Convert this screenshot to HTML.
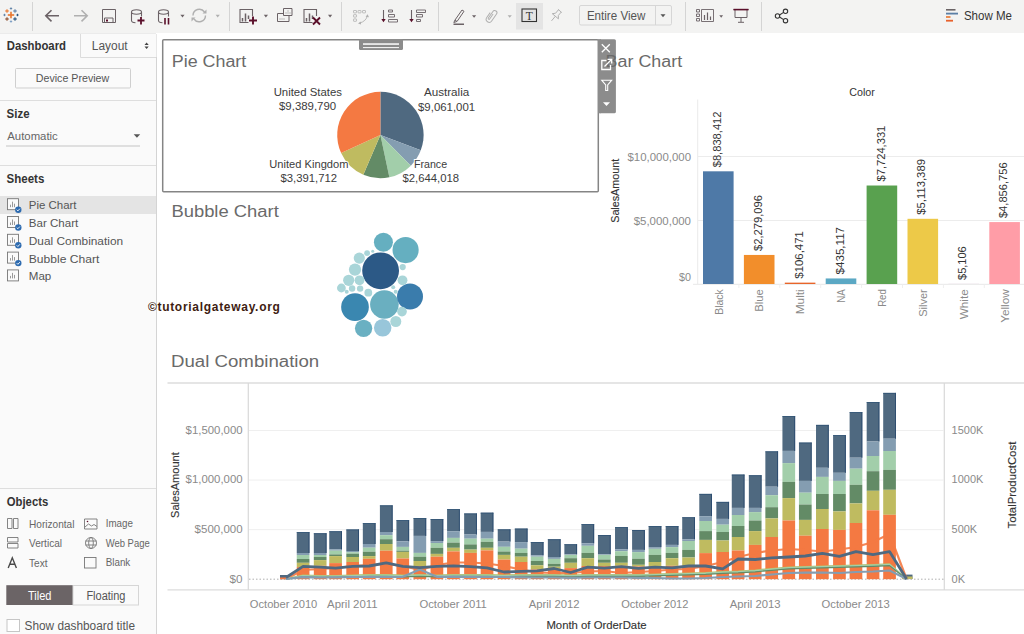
<!DOCTYPE html>
<html><head><meta charset="utf-8"><style>
html,body{margin:0;padding:0;width:1024px;height:634px;overflow:hidden;background:#fff}
svg{display:block;font-family:"Liberation Sans",sans-serif}
</style></head><body>
<svg width="1024" height="634" viewBox="0 0 1024 634">
<rect x="0" y="0" width="1024" height="634" fill="#ffffff" />
<rect x="0" y="0" width="1024" height="33" fill="#f3f3f2" />
<line x1="0" y1="33.5" x2="156" y2="33.5" stroke="#ebebeb" stroke-width="1" />
<rect x="0" y="34" width="156" height="600" fill="#fafafa" />
<line x1="156.5" y1="34" x2="156.5" y2="634" stroke="#d4d4d4" stroke-width="1" />
<line x1="32.5" y1="2" x2="32.5" y2="31" stroke="#d4d4d4" stroke-width="1" />
<line x1="229.5" y1="2" x2="229.5" y2="31" stroke="#d4d4d4" stroke-width="1" />
<line x1="341.5" y1="2" x2="341.5" y2="31" stroke="#d4d4d4" stroke-width="1" />
<line x1="438.5" y1="2" x2="438.5" y2="31" stroke="#d4d4d4" stroke-width="1" />
<line x1="685.5" y1="2" x2="685.5" y2="31" stroke="#d4d4d4" stroke-width="1" />
<line x1="761.5" y1="2" x2="761.5" y2="31" stroke="#d4d4d4" stroke-width="1" />
<line x1="7.8" y1="15" x2="14.2" y2="15" stroke="#e8762d" stroke-width="1.6" />
<line x1="11" y1="11.8" x2="11" y2="18.2" stroke="#e8762d" stroke-width="1.6" />
<line x1="5.2" y1="11" x2="8.8" y2="11" stroke="#e8762d" stroke-width="1.1" />
<line x1="7" y1="9.2" x2="7" y2="12.8" stroke="#e8762d" stroke-width="1.1" />
<line x1="13.2" y1="11" x2="16.8" y2="11" stroke="#5b7fa6" stroke-width="1.1" />
<line x1="15" y1="9.2" x2="15" y2="12.8" stroke="#5b7fa6" stroke-width="1.1" />
<line x1="5.2" y1="19" x2="8.8" y2="19" stroke="#8a4b2c" stroke-width="1.1" />
<line x1="7" y1="17.2" x2="7" y2="20.8" stroke="#8a4b2c" stroke-width="1.1" />
<line x1="13.2" y1="19" x2="16.8" y2="19" stroke="#1f4e79" stroke-width="1.1" />
<line x1="15" y1="17.2" x2="15" y2="20.8" stroke="#1f4e79" stroke-width="1.1" />
<line x1="9.8" y1="8.5" x2="12.2" y2="8.5" stroke="#5b7fa6" stroke-width="0.9" />
<line x1="11" y1="7.3" x2="11" y2="9.7" stroke="#5b7fa6" stroke-width="0.9" />
<line x1="9.8" y1="21.5" x2="12.2" y2="21.5" stroke="#7b9cc3" stroke-width="0.9" />
<line x1="11" y1="20.3" x2="11" y2="22.7" stroke="#7b9cc3" stroke-width="0.9" />
<line x1="3.3" y1="15" x2="5.7" y2="15" stroke="#5b7fa6" stroke-width="0.9" />
<line x1="4.5" y1="13.8" x2="4.5" y2="16.2" stroke="#5b7fa6" stroke-width="0.9" />
<line x1="16.3" y1="15" x2="18.7" y2="15" stroke="#1f4e79" stroke-width="0.9" />
<line x1="17.5" y1="13.8" x2="17.5" y2="16.2" stroke="#1f4e79" stroke-width="0.9" />
<path d="M59 15.8 H46 M51.5 10.2 L45.8 15.8 L51.5 21.4" fill="none" stroke="#6b6266" stroke-width="1.6"/>
<path d="M74 15.8 H87 M81.5 10.2 L87.2 15.8 L81.5 21.4" fill="none" stroke="#b0b0b0" stroke-width="1.6"/>
<path d="M102.5 9.5 H115.5 V22.5 H102.5 Z M104.5 22.5 V18 H113 V22.5" fill="none" stroke="#6b6266" stroke-width="1"/>
<rect x="106" y="19.5" width="2" height="2" fill="#5a0f2a" />
<path d="M131.5 12.0 a5 2.2 0 0 1 10 0 a5 2.2 0 0 1 -10 0 V20.5 q0 2 4 2.3 M141.5 12.0 V16.5" fill="none" stroke="#6b6266" stroke-width="1.1"/>
<path d="M137.5 20.5 H144.5 M141 17 V24.5" stroke="#5a0f2a" stroke-width="1.8"/>
<path d="M158.5 12.0 a5 2.2 0 0 1 10 0 a5 2.2 0 0 1 -10 0 V20.5 q0 2 4 2.3 M168.5 12.0 V16.5" fill="none" stroke="#6b6266" stroke-width="1.1"/>
<path d="M165 18 V24.5 M168.5 18 V24.5" stroke="#5a0f2a" stroke-width="1.6"/>
<path d="M180.4 14.8 h4.2 l-2.1 2.6 z" fill="#6b6266"/>
<path d="M193 15.5 a6.3 6.3 0 0 1 11.5 -3.5 M205.5 15.5 a6.3 6.3 0 0 1 -11.5 3.5" fill="none" stroke="#b0b0b0" stroke-width="1.4"/>
<path d="M206.5 9.5 v4 h-4 z M191.5 21.5 v-4 h4 z" fill="#b0b0b0"/>
<path d="M215.6 14.8 h4.2 l-2.1 2.6 z" fill="#b0b0b0"/>
<path d="M252.5 16 V9.5 H240.0 V22.5 H248.5" fill="none" stroke="#6b6266" stroke-width="1.1"/>
<path d="M242.5 18 v3.5 M245.5 13.5 v8 M248.5 15.5 v3.5" stroke="#6b6266" stroke-width="1.5"/>
<path d="M249 20.5 H257 M253 16.5 V24.5" stroke="#5a0f2a" stroke-width="1.9"/>
<path d="M263.8 14.8 h4.2 l-2.1 2.6 z" fill="#6b6266"/>
<path d="M283.5 8.5 H292 V15.5 H283.5 Z M277.5 13.5 H283 M277.5 13.5 V21.5 H289 V16" fill="none" stroke="#6b6266" stroke-width="1"/>
<path d="M286 14 v-2 M288 14 v-4 M290 14 v-2 M280 20 v-2 M282 20 v-2 M284 20 v-2" stroke="#b0b0b0" stroke-width="0.8"/>
<path d="M316.5 16 V9.5 H304.0 V22.5 H312.5" fill="none" stroke="#6b6266" stroke-width="1.1"/>
<path d="M306.5 18 v3.5 M309.5 13.5 v8 M312.5 15.5 v3.5" stroke="#6b6266" stroke-width="1.5"/>
<path d="M313 17.5 L320 24.5 M320 17.5 L313 24.5" stroke="#5a0f2a" stroke-width="1.9"/>
<path d="M328 14.8 h4.2 l-2.1 2.6 z" fill="#6b6266"/>
<rect x="353.5" y="10.5" width="3" height="2.4" rx="0.4" fill="none" stroke="#b0b0b0" stroke-width="0.8"/>
<rect x="358" y="10.5" width="3" height="2.4" rx="0.4" fill="none" stroke="#b0b0b0" stroke-width="0.8"/>
<rect x="362.5" y="10.5" width="3" height="2.4" rx="0.4" fill="none" stroke="#b0b0b0" stroke-width="0.8"/>
<rect x="353.5" y="14.7" width="3" height="2.4" rx="0.4" fill="none" stroke="#b0b0b0" stroke-width="0.8"/>
<rect x="353.5" y="18.9" width="3" height="2.4" rx="0.4" fill="none" stroke="#b0b0b0" stroke-width="0.8"/>
<path d="M359.5 23 q6.5 -1.5 8 -7.5" fill="none" stroke="#b0b0b0" stroke-width="0.9"/>
<path d="M365.6 16.8 l2 -2.6 l1.4 3z M358 23.5 l2.8 -2 l0.3 3z" fill="#b0b0b0"/>
<path d="M383.5 10 V21" stroke="#6b6266" stroke-width="1.1"/>
<path d="M381.3 19 h4.4 l-2.2 3.3z" fill="#5a0f2a"/>
<path d="M388.5 10 h4 v2 h-4z M388.5 14.5 h6 v2.5 h-6z M388.5 19.5 h9 v2.5 h-9z" fill="none" stroke="#6b6266" stroke-width="0.9"/>
<path d="M411.5 10 V21" stroke="#6b6266" stroke-width="1.1"/>
<path d="M409.3 19 h4.4 l-2.2 3.3z" fill="#5a0f2a"/>
<path d="M416.5 10 h9 v2.5 h-9z M416.5 14.5 h6 v2.5 h-6z M416.5 19.5 h4 v2 h-4z" fill="none" stroke="#6b6266" stroke-width="0.9"/>
<path d="M455 20 L462 10 l2 1.3 L457 21.5 z M455 20 l-1.2 2.5 l3 -1" fill="none" stroke="#6b6266" stroke-width="1"/>
<rect x="453.5" y="23.5" width="10.5" height="1.5" fill="#6b6266" />
<path d="M472 15.2 h4.2 l-2.1 2.6 z" fill="#6b6266"/>
<path transform="translate(491.5,16) rotate(35)" d="M-3 -2 V4 a3 3 0 0 0 6 0 V-4.5 a2.2 2.2 0 0 0 -4.4 0 V3.5 a0.8 0.8 0 0 0 1.6 0 V-2.5" fill="none" stroke="#b0b0b0" stroke-width="1"/>
<path d="M507.6 15.2 h4.2 l-2.1 2.6 z" fill="#b0b0b0"/>
<rect x="516" y="3" width="27" height="26.5" fill="#e4e4e4" />
<rect x="522" y="9" width="14.5" height="12.5" fill="none" stroke="#333" stroke-width="1.1"/>
<text x="529.3" y="19.6" font-family="Liberation Serif" font-size="11.5" fill="#333" text-anchor="middle">T</text>
<g transform="translate(556,15.5) rotate(40)" fill="none" stroke="#b0b0b0" stroke-width="0.9"><path d="M-2.5 -6 h5 M-1.8 -6 V-1.5 L-4 1 H4 L1.8 -1.5 V-6 M0 1 V7"/></g>
<rect x="579.5" y="5.5" width="92" height="19.5" rx="1.5" fill="#f3f3f2" stroke="#d6d6d6"/>
<line x1="655.5" y1="6" x2="655.5" y2="25" stroke="#d6d6d6" stroke-width="1" />
<text x="586.9" y="19.8" font-size="12.3" fill="#555" font-weight="400" text-anchor="start" textLength="58.4" lengthAdjust="spacingAndGlyphs" >Entire View</text>
<path d="M660.5 14.3 h5 l-2.5 3 z" fill="#555"/>
<path d="M696.5 9.5 h3 v2.5 h-3z M696.5 14 h3 v2.5 h-3z M696.5 18.5 h3 v2.5 h-3z M701.5 9.5 h12 V21.5 h-12z" fill="none" stroke="#6b6266" stroke-width="0.9"/>
<path d="M704.5 15 v5 M707.5 12.5 v7.5 M710.5 16.5 v3.5" stroke="#6b6266" stroke-width="1.2"/>
<path d="M719.3 15.3 h3.8 l-1.9 2.4 z" fill="#6b6266"/>
<path d="M733.5 9.5 h15 M735 10 V17.5 H747 V10 M741 17.5 V22 M738 22.3 h6" fill="none" stroke="#6b6266" stroke-width="1"/>
<line x1="733.5" y1="9.6" x2="748.5" y2="9.6" stroke="#5a0f2a" stroke-width="1.6" />
<g fill="none" stroke="#333" stroke-width="1.1"><circle cx="777.5" cy="16" r="2.2"/><circle cx="785.5" cy="11.3" r="2.2"/><circle cx="785.5" cy="20.7" r="2.2"/><path d="M779.5 15 L783.6 12.4 M779.5 17 L783.6 19.6"/></g>
<rect x="946" y="9" width="9.5" height="1.6" fill="#6b6466" />
<rect x="946" y="12.7" width="12" height="1.8" fill="#5b7fa6" />
<rect x="946" y="16.2" width="4.5" height="1.6" fill="#e8762d" />
<rect x="946" y="19.8" width="7" height="1.8" fill="#e8622d" />
<text x="963.9" y="19.8" font-size="12" fill="#333" font-weight="400" text-anchor="start" textLength="48" lengthAdjust="spacingAndGlyphs" >Show Me</text>
<rect x="80.5" y="34" width="76" height="23" fill="#fafafa" />
<line x1="80.5" y1="34" x2="80.5" y2="57.5" stroke="#dcdcdc" stroke-width="1" />
<line x1="80.5" y1="57.5" x2="156" y2="57.5" stroke="#dcdcdc" stroke-width="1" />
<text x="6.8" y="49.9" font-size="12" fill="#333" font-weight="700" text-anchor="start" textLength="59.2" lengthAdjust="spacingAndGlyphs" >Dashboard</text>
<text x="91.8" y="50" font-size="12" fill="#555" font-weight="400" text-anchor="start" textLength="35.8" lengthAdjust="spacingAndGlyphs" >Layout</text>
<path d="M144.5 45 l2.1 -2.6 l2.1 2.6z M144.5 46.5 l2.1 2.6 l2.1 -2.6z" fill="#444"/>
<rect x="15.5" y="68.5" width="115" height="19.5" rx="1" fill="#fafafa" stroke="#cfcfcf"/>
<text x="35.8" y="81.7" font-size="10.8" fill="#555" font-weight="400" text-anchor="start" textLength="73.4" lengthAdjust="spacingAndGlyphs" >Device Preview</text>
<line x1="0" y1="100.5" x2="156" y2="100.5" stroke="#dedede" stroke-width="1" />
<text x="6.6" y="118.1" font-size="12" fill="#333" font-weight="700" text-anchor="start" textLength="22.9" lengthAdjust="spacingAndGlyphs" >Size</text>
<text x="7.3" y="139.8" font-size="11" fill="#666" font-weight="400" text-anchor="start" textLength="50.5" lengthAdjust="spacingAndGlyphs" >Automatic</text>
<path d="M133.7 134.3 h6.5 l-3.25 3.5 z" fill="#555"/>
<line x1="6" y1="146" x2="140" y2="146" stroke="#d6d6d6" stroke-width="1.3" />
<line x1="0" y1="165.5" x2="156" y2="165.5" stroke="#dedede" stroke-width="1" />
<text x="6.6" y="182.9" font-size="12" fill="#333" font-weight="700" text-anchor="start" textLength="37.7" lengthAdjust="spacingAndGlyphs" >Sheets</text>
<rect x="0" y="196" width="156" height="18" fill="#e4e4e4" />
<rect x="7.5" y="198.7" width="11" height="11" fill="#fafafa" stroke="#777" stroke-width="0.9"/>
<path d="M10.5 207.2 v-2.5 M12.5 207.2 v-5.5 M14.5 207.2 v-3.5" stroke="#999" stroke-width="1"/>
<circle cx="18.3" cy="209.7" r="3.2" fill="#2d6bb0"/>
<path d="M16.7 209.7 l1.2 1.2 l2 -2.2" stroke="#fff" stroke-width="0.9" fill="none"/>
<text x="28.8" y="209.2" font-size="11.4" fill="#555" font-weight="400" text-anchor="start" textLength="47.7" lengthAdjust="spacingAndGlyphs" >Pie Chart</text>
<rect x="7.5" y="216.5" width="11" height="11" fill="#fafafa" stroke="#777" stroke-width="0.9"/>
<path d="M10.5 225.0 v-2.5 M12.5 225.0 v-5.5 M14.5 225.0 v-3.5" stroke="#999" stroke-width="1"/>
<circle cx="18.3" cy="227.5" r="3.2" fill="#2d6bb0"/>
<path d="M16.7 227.5 l1.2 1.2 l2 -2.2" stroke="#fff" stroke-width="0.9" fill="none"/>
<text x="28.8" y="227.0" font-size="11.4" fill="#555" font-weight="400" text-anchor="start" textLength="49.5" lengthAdjust="spacingAndGlyphs" >Bar Chart</text>
<rect x="7.5" y="234.29999999999998" width="11" height="11" fill="#fafafa" stroke="#777" stroke-width="0.9"/>
<path d="M10.5 242.79999999999998 v-2.5 M12.5 242.79999999999998 v-5.5 M14.5 242.79999999999998 v-3.5" stroke="#999" stroke-width="1"/>
<circle cx="18.3" cy="245.29999999999998" r="3.2" fill="#2d6bb0"/>
<path d="M16.7 245.29999999999998 l1.2 1.2 l2 -2.2" stroke="#fff" stroke-width="0.9" fill="none"/>
<text x="28.8" y="244.79999999999998" font-size="11.4" fill="#555" font-weight="400" text-anchor="start" textLength="94.3" lengthAdjust="spacingAndGlyphs" >Dual Combination</text>
<rect x="7.5" y="252.10000000000002" width="11" height="11" fill="#fafafa" stroke="#777" stroke-width="0.9"/>
<path d="M10.5 260.6 v-2.5 M12.5 260.6 v-5.5 M14.5 260.6 v-3.5" stroke="#999" stroke-width="1"/>
<circle cx="18.3" cy="263.1" r="3.2" fill="#2d6bb0"/>
<path d="M16.7 263.1 l1.2 1.2 l2 -2.2" stroke="#fff" stroke-width="0.9" fill="none"/>
<text x="28.8" y="262.6" font-size="11.4" fill="#555" font-weight="400" text-anchor="start" textLength="70.5" lengthAdjust="spacingAndGlyphs" >Bubble Chart</text>
<rect x="7.5" y="269.9" width="11" height="11" fill="#fafafa" stroke="#777" stroke-width="0.9"/>
<path d="M10.5 278.4 v-2.5 M12.5 278.4 v-5.5 M14.5 278.4 v-3.5" stroke="#999" stroke-width="1"/>
<text x="28.8" y="280.4" font-size="11.4" fill="#555" font-weight="400" text-anchor="start" textLength="22.5" lengthAdjust="spacingAndGlyphs" >Map</text>
<line x1="0" y1="488.5" x2="156" y2="488.5" stroke="#dedede" stroke-width="1" />
<text x="6.8" y="506" font-size="12" fill="#333" font-weight="700" text-anchor="start" textLength="41.4" lengthAdjust="spacingAndGlyphs" >Objects</text>
<path d="M7.5 518.5 h4.5 v10 h-4.5z M13.5 518.5 h4.5 v10 h-4.5z" fill="none" stroke="#777" stroke-width="0.9"/>
<path d="M7.5 537.5 h10.5 v4.5 h-10.5z M7.5 543.5 h10.5 v4.5 h-10.5z" fill="none" stroke="#777" stroke-width="0.9"/>
<path d="M8.2 568 L12.3 557.8 L16.4 568 M9.6 564.3 h5.4" fill="none" stroke="#4a4a4a" stroke-width="1.4"/>
<text x="29" y="527.5" font-size="10.8" fill="#666" font-weight="400" text-anchor="start" textLength="45.4" lengthAdjust="spacingAndGlyphs" >Horizontal</text>
<text x="29" y="547" font-size="10.8" fill="#666" font-weight="400" text-anchor="start" textLength="33" lengthAdjust="spacingAndGlyphs" >Vertical</text>
<text x="29" y="566.6" font-size="10.8" fill="#666" font-weight="400" text-anchor="start" textLength="18.5" lengthAdjust="spacingAndGlyphs" >Text</text>
<path d="M84.5 519 h12.5 v10 h-12.5z M85 527 l3.5 -3 l3 2 l2.5 -1.5 l3 2" fill="none" stroke="#777" stroke-width="0.9"/>
<circle cx="87.5" cy="521.5" r="0.8" fill="#5a0f2a"/>
<g fill="none" stroke="#777" stroke-width="0.9"><circle cx="91" cy="543" r="5.5"/><ellipse cx="91" cy="543" rx="2.3" ry="5.5"/><path d="M85.5 541 h11 M85.5 545 h11"/></g>
<rect x="84.5" y="557.5" width="11.5" height="10.5" fill="none" stroke="#777" stroke-width="0.9"/>
<text x="105.7" y="527" font-size="10.8" fill="#666" font-weight="400" text-anchor="start" textLength="27.2" lengthAdjust="spacingAndGlyphs" >Image</text>
<text x="105.7" y="546.5" font-size="10.8" fill="#666" font-weight="400" text-anchor="start" textLength="44" lengthAdjust="spacingAndGlyphs" >Web Page</text>
<text x="105.7" y="566" font-size="10.8" fill="#666" font-weight="400" text-anchor="start" textLength="24.6" lengthAdjust="spacingAndGlyphs" >Blank</text>
<rect x="6.3" y="585.2" width="66.7" height="19.8" fill="#6b6466" />
<rect x="73" y="585.5" width="65.5" height="19.5" fill="#fafafa" stroke="#d6d6d6"/>
<text x="28" y="599.7" font-size="12" fill="#fff" font-weight="400" text-anchor="start" textLength="23.5" lengthAdjust="spacingAndGlyphs" >Tiled</text>
<text x="86.4" y="599.7" font-size="12" fill="#555" font-weight="400" text-anchor="start" textLength="39.1" lengthAdjust="spacingAndGlyphs" >Floating</text>
<rect x="7" y="619.5" width="12.5" height="12" fill="#fff" stroke="#c6c6c6"/>
<text x="24.5" y="629.7" font-size="12.5" fill="#555" font-weight="400" text-anchor="start" textLength="110.5" lengthAdjust="spacingAndGlyphs" >Show dashboard title</text>
<rect x="162.7" y="39.7" width="435.6" height="152" rx="1" fill="#fff" stroke="#858585" stroke-width="1.5"/>
<text x="171.8" y="67.2" font-size="17.3" fill="#6a6a6a" font-weight="400" text-anchor="start" textLength="74.5" lengthAdjust="spacingAndGlyphs" >Pie Chart</text>
<rect x="359" y="39" width="44" height="11" rx="1.5" fill="#8c8c8c"/>
<rect x="363" y="43.2" width="36" height="1.7" fill="#f0f0f0" />
<rect x="363" y="47" width="36" height="1.1" fill="#f0f0f0" />
<path d="M380.4 135.0 L380.40 91.80 A43.2 43.2 0 0 1 420.78 150.34 Z" fill="#4f6980"/>
<path d="M380.4 135.0 L420.78 150.34 A43.2 43.2 0 0 1 410.84 165.65 Z" fill="#849db1"/>
<path d="M380.4 135.0 L410.84 165.65 A43.2 43.2 0 0 1 389.38 177.26 Z" fill="#a2ceaa"/>
<path d="M380.4 135.0 L389.38 177.26 A43.2 43.2 0 0 1 363.31 174.68 Z" fill="#638b66"/>
<path d="M380.4 135.0 L363.31 174.68 A43.2 43.2 0 0 1 341.12 152.98 Z" fill="#bfbb60"/>
<path d="M380.4 135.0 L341.12 152.98 A43.2 43.2 0 0 1 380.40 91.80 Z" fill="#f47942"/>
<text x="307.8" y="95.6" font-size="10.6" fill="#3c3c3c" font-weight="400" text-anchor="middle" textLength="68.3" lengthAdjust="spacingAndGlyphs" stroke="#fff" stroke-width="2" paint-order="stroke">United States</text>
<text x="307.6" y="110.3" font-size="10.6" fill="#3c3c3c" font-weight="400" text-anchor="middle" textLength="57.2" lengthAdjust="spacingAndGlyphs" stroke="#fff" stroke-width="2" paint-order="stroke">$9,389,790</text>
<text x="446.6" y="95.6" font-size="10.6" fill="#3c3c3c" font-weight="400" text-anchor="middle" textLength="45.4" lengthAdjust="spacingAndGlyphs" stroke="#fff" stroke-width="2" paint-order="stroke">Australia</text>
<text x="446.6" y="110.5" font-size="10.6" fill="#3c3c3c" font-weight="400" text-anchor="middle" textLength="57.2" lengthAdjust="spacingAndGlyphs" stroke="#fff" stroke-width="2" paint-order="stroke">$9,061,001</text>
<text x="308.9" y="167.6" font-size="10.6" fill="#3c3c3c" font-weight="400" text-anchor="middle" textLength="79.1" lengthAdjust="spacingAndGlyphs" stroke="#fff" stroke-width="2" paint-order="stroke">United Kingdom</text>
<text x="308.8" y="182.2" font-size="10.6" fill="#3c3c3c" font-weight="400" text-anchor="middle" textLength="56.6" lengthAdjust="spacingAndGlyphs" stroke="#fff" stroke-width="2" paint-order="stroke">$3,391,712</text>
<text x="430.5" y="167.8" font-size="10.6" fill="#3c3c3c" font-weight="400" text-anchor="middle" textLength="33.2" lengthAdjust="spacingAndGlyphs" stroke="#fff" stroke-width="2" paint-order="stroke">France</text>
<text x="430.8" y="182.2" font-size="10.6" fill="#3c3c3c" font-weight="400" text-anchor="middle" textLength="56.6" lengthAdjust="spacingAndGlyphs" stroke="#fff" stroke-width="2" paint-order="stroke">$2,644,018</text>
<text x="849.2" y="96.4" font-size="11" fill="#333" font-weight="400" text-anchor="start" textLength="25.6" lengthAdjust="spacingAndGlyphs" >Color</text>
<line x1="697.7" y1="99.5" x2="697.7" y2="284" stroke="#ebebeb" stroke-width="1" />
<line x1="698" y1="156.5" x2="1024" y2="156.5" stroke="#ececec" stroke-width="1" />
<line x1="698" y1="220.5" x2="1024" y2="220.5" stroke="#ececec" stroke-width="1" />
<line x1="693" y1="284.3" x2="1024" y2="284.3" stroke="#e8e8e8" stroke-width="1" />
<text x="691" y="160.5" font-size="11" fill="#8a8a8a" font-weight="400" text-anchor="end" textLength="63.5" lengthAdjust="spacingAndGlyphs" >$10,000,000</text>
<text x="691" y="225.3" font-size="11" fill="#8a8a8a" font-weight="400" text-anchor="end" textLength="57.3" lengthAdjust="spacingAndGlyphs" >$5,000,000</text>
<text x="691" y="280.5" font-size="11" fill="#8a8a8a" font-weight="400" text-anchor="end" textLength="12" lengthAdjust="spacingAndGlyphs" >$0</text>
<text transform="translate(619.3,190.8) rotate(-90)" x="0" y="0" font-size="11" fill="#333" stroke="#333" stroke-width="0.12" text-anchor="middle" textLength="64" lengthAdjust="spacingAndGlyphs">SalesAmount</text>
<rect x="703.0" y="171.31" width="30.6" height="112.69" fill="#4e79a7" />
<text transform="translate(720.90,167.31) rotate(-90)" font-size="11.2" fill="#333" textLength="55.8" lengthAdjust="spacingAndGlyphs">$8,838,412</text>
<text transform="translate(722.50,289.3) rotate(-90)" font-size="11" fill="#8a8a8a" text-anchor="end" textLength="25.5" lengthAdjust="spacingAndGlyphs">Black</text>
<rect x="743.9" y="254.94" width="30.6" height="29.06" fill="#f28e2b" />
<line x1="738.9" y1="284.5" x2="738.9" y2="288" stroke="#efefef" stroke-width="1" />
<text transform="translate(761.80,250.94) rotate(-90)" font-size="11.2" fill="#333" textLength="55.8" lengthAdjust="spacingAndGlyphs">$2,279,096</text>
<text transform="translate(763.40,289.3) rotate(-90)" font-size="11" fill="#8a8a8a" text-anchor="end" textLength="22.5" lengthAdjust="spacingAndGlyphs">Blue</text>
<rect x="784.8" y="282.64" width="30.6" height="1.36" fill="#e8652a" />
<line x1="779.8" y1="284.5" x2="779.8" y2="288" stroke="#efefef" stroke-width="1" />
<text transform="translate(802.70,278.64) rotate(-90)" font-size="11.2" fill="#333" textLength="47.5" lengthAdjust="spacingAndGlyphs">$106,471</text>
<text transform="translate(804.30,289.3) rotate(-90)" font-size="11" fill="#8a8a8a" text-anchor="end" textLength="25" lengthAdjust="spacingAndGlyphs">Multi</text>
<rect x="825.7" y="278.45" width="30.6" height="5.55" fill="#5ba8c4" />
<line x1="820.7" y1="284.5" x2="820.7" y2="288" stroke="#efefef" stroke-width="1" />
<text transform="translate(843.60,274.45) rotate(-90)" font-size="11.2" fill="#333" textLength="47.5" lengthAdjust="spacingAndGlyphs">$435,117</text>
<text transform="translate(845.20,289.3) rotate(-90)" font-size="11" fill="#8a8a8a" text-anchor="end" textLength="13.5" lengthAdjust="spacingAndGlyphs">NA</text>
<rect x="866.6" y="185.51" width="30.6" height="98.49" fill="#59a14f" />
<line x1="861.6" y1="284.5" x2="861.6" y2="288" stroke="#efefef" stroke-width="1" />
<text transform="translate(884.50,181.51) rotate(-90)" font-size="11.2" fill="#333" textLength="55.8" lengthAdjust="spacingAndGlyphs">$7,724,331</text>
<text transform="translate(886.10,289.3) rotate(-90)" font-size="11" fill="#8a8a8a" text-anchor="end" textLength="17.5" lengthAdjust="spacingAndGlyphs">Red</text>
<rect x="907.5" y="218.8" width="30.6" height="65.2" fill="#edc948" />
<line x1="902.5" y1="284.5" x2="902.5" y2="288" stroke="#efefef" stroke-width="1" />
<text transform="translate(925.40,214.80) rotate(-90)" font-size="11.2" fill="#333" textLength="55.8" lengthAdjust="spacingAndGlyphs">$5,113,389</text>
<text transform="translate(927.00,289.3) rotate(-90)" font-size="11" fill="#8a8a8a" text-anchor="end" textLength="27.5" lengthAdjust="spacingAndGlyphs">Silver</text>
<rect x="948.4" y="283.93" width="30.6" height="0.07" fill="#b07aa1" />
<line x1="943.4" y1="284.5" x2="943.4" y2="288" stroke="#efefef" stroke-width="1" />
<text transform="translate(966.30,279.93) rotate(-90)" font-size="11.2" fill="#333" textLength="33.6" lengthAdjust="spacingAndGlyphs">$5,106</text>
<text transform="translate(967.90,289.3) rotate(-90)" font-size="11" fill="#8a8a8a" text-anchor="end" textLength="30" lengthAdjust="spacingAndGlyphs">White</text>
<rect x="989.3" y="222.08" width="30.6" height="61.92" fill="#ff9da7" />
<line x1="984.3" y1="284.5" x2="984.3" y2="288" stroke="#efefef" stroke-width="1" />
<text transform="translate(1007.20,218.08) rotate(-90)" font-size="11.2" fill="#333" textLength="55.8" lengthAdjust="spacingAndGlyphs">$4,856,756</text>
<text transform="translate(1008.80,289.3) rotate(-90)" font-size="11" fill="#8a8a8a" text-anchor="end" textLength="33.5" lengthAdjust="spacingAndGlyphs">Yellow</text>
<rect x="598.6" y="39.2" width="17.3" height="74" rx="1.5" fill="#8c8c8c"/>
<rect x="598" y="39.2" width="3" height="74" fill="#8c8c8c" />
<text x="605.6" y="67.3" font-size="17.3" fill="#6a6a6a" font-weight="400" text-anchor="start" textLength="76.5" lengthAdjust="spacingAndGlyphs" >Bar Chart</text>
<path d="M601.8 44.2 L609.8 52.2 M609.8 44.2 L601.8 52.2" stroke="#fff" stroke-width="1.3"/>
<path d="M606.5 60.5 H601.8 V69.5 H610.5 V65 M604.5 66.5 L611 60 M607.5 59.3 H611.7 V63.5" fill="none" stroke="#fff" stroke-width="1.3"/>
<path d="M601.7 80.2 H611.7 L607.7 85 V90.5 H605.7 V85 Z" fill="none" stroke="#fff" stroke-width="1.1"/>
<path d="M603 102.3 h7 l-3.5 3.6z" fill="#fff"/>
<text x="171.4" y="217.3" font-size="17.3" fill="#6a6a6a" font-weight="400" text-anchor="start" textLength="107.4" lengthAdjust="spacingAndGlyphs" >Bubble Chart</text>
<text x="147.9" y="311.3" font-size="12" fill="#3e1d12" font-weight="700" textLength="132" lengthAdjust="spacing">©tutorialgateway.org</text>
<circle cx="380.6" cy="270.8" r="18.4" fill="#2c5986"/>
<circle cx="383.4" cy="242.2" r="9.5" fill="#65afc0"/>
<circle cx="405.6" cy="250.1" r="13.1" fill="#65afc0"/>
<circle cx="355.0" cy="307.1" r="13.85" fill="#3a87b0"/>
<circle cx="384.4" cy="304.5" r="14.3" fill="#6aafc0"/>
<circle cx="410.0" cy="296.5" r="13.0" fill="#3a7cac"/>
<circle cx="363.6" cy="328.3" r="8.65" fill="#6ab0c2"/>
<circle cx="382.7" cy="327.8" r="8.75" fill="#98c6da"/>
<circle cx="395.8" cy="321.5" r="5.5" fill="#a9d5d8"/>
<circle cx="402.0" cy="311.6" r="4.85" fill="#a9d5d8"/>
<circle cx="359.3" cy="258.1" r="5.6" fill="#a9d5d8"/>
<circle cx="355.0" cy="269.6" r="6.1" fill="#a9d5d8"/>
<circle cx="348.7" cy="280.3" r="5.6" fill="#a9d5d8"/>
<circle cx="359.5" cy="280.3" r="4.9" fill="#a9d5d8"/>
<circle cx="402.5" cy="280.3" r="4.9" fill="#a9d5d8"/>
<circle cx="402.7" cy="267.1" r="3.1" fill="#a9d5d8"/>
<circle cx="367.1" cy="253.2" r="2.9" fill="#a9d5d8"/>
<circle cx="372.7" cy="251.3" r="1.5" fill="#a9d5d8"/>
<circle cx="341.4" cy="288.0" r="4.4" fill="#a9d5d8"/>
<circle cx="352.1" cy="288.5" r="3.2" fill="#a9d5d8"/>
<circle cx="360.1" cy="288.6" r="3.2" fill="#a9d5d8"/>
<circle cx="368.3" cy="292.7" r="3.9" fill="#a9d5d8"/>
<circle cx="346.7" cy="291.7" r="2.0" fill="#a9d5d8"/>
<circle cx="395.7" cy="291.7" r="2.0" fill="#a9d5d8"/>
<circle cx="393.2" cy="287.3" r="2.0" fill="#a9d5d8"/>
<text x="171.0" y="367.4" font-size="17.3" fill="#6a6a6a" font-weight="400" text-anchor="start" textLength="148.2" lengthAdjust="spacingAndGlyphs" >Dual Combination</text>
<line x1="167.5" y1="383" x2="1024" y2="383" stroke="#dcdcdc" stroke-width="1.3" />
<line x1="167.5" y1="589.8" x2="1024" y2="589.8" stroke="#dcdcdc" stroke-width="1.3" />
<line x1="248.3" y1="383" x2="248.3" y2="590" stroke="#d8d8d8" stroke-width="1.2" />
<line x1="944.3" y1="383" x2="944.3" y2="590" stroke="#d8d8d8" stroke-width="1.2" />
<line x1="249" y1="529.6333333333333" x2="944" y2="529.6333333333333" stroke="#efefef" stroke-width="1" />
<line x1="249" y1="480.06666666666666" x2="944" y2="480.06666666666666" stroke="#efefef" stroke-width="1" />
<line x1="249" y1="430.5" x2="944" y2="430.5" stroke="#efefef" stroke-width="1" />
<line x1="249" y1="579.2" x2="944" y2="579.2" stroke="#9a9a9a" stroke-width="0.8" stroke-dasharray="1.5,2"/>
<text x="242.6" y="433.6" font-size="11" fill="#8a8a8a" font-weight="400" text-anchor="end" textLength="57" lengthAdjust="spacingAndGlyphs" >$1,500,000</text>
<text x="242.6" y="483.4" font-size="11" fill="#8a8a8a" font-weight="400" text-anchor="end" textLength="57" lengthAdjust="spacingAndGlyphs" >$1,000,000</text>
<text x="242.6" y="533.0" font-size="11" fill="#8a8a8a" font-weight="400" text-anchor="end" textLength="48" lengthAdjust="spacingAndGlyphs" >$500,000</text>
<text x="242.6" y="582.8" font-size="11" fill="#8a8a8a" font-weight="400" text-anchor="end" textLength="13" lengthAdjust="spacingAndGlyphs" >$0</text>
<text x="951.6" y="433.6" font-size="11" fill="#8a8a8a" font-weight="400" text-anchor="start" textLength="31.7" lengthAdjust="spacingAndGlyphs" >1500K</text>
<text x="951.6" y="483.3" font-size="11" fill="#8a8a8a" font-weight="400" text-anchor="start" textLength="31.7" lengthAdjust="spacingAndGlyphs" >1000K</text>
<text x="951.6" y="533.0" font-size="11" fill="#8a8a8a" font-weight="400" text-anchor="start" textLength="25.5" lengthAdjust="spacingAndGlyphs" >500K</text>
<text x="951.6" y="582.8" font-size="11" fill="#8a8a8a" font-weight="400" text-anchor="start" textLength="13.5" lengthAdjust="spacingAndGlyphs" >0K</text>
<text transform="translate(179.2,485.1) rotate(-90)" font-size="11" fill="#333" stroke="#333" stroke-width="0.12" text-anchor="middle" textLength="65.8" lengthAdjust="spacingAndGlyphs">SalesAmount</text>
<text transform="translate(1016,485.05) rotate(-90)" font-size="11" fill="#333" stroke="#333" stroke-width="0.12" text-anchor="middle" textLength="86.7" lengthAdjust="spacingAndGlyphs">TotalProductCost</text>
<text x="249.8" y="607.6" font-size="11" fill="#8a8a8a" font-weight="400" text-anchor="start" textLength="67.5" lengthAdjust="spacingAndGlyphs" >October 2010</text>
<text x="327.1" y="607.6" font-size="11" fill="#8a8a8a" font-weight="400" text-anchor="start" textLength="50.6" lengthAdjust="spacingAndGlyphs" >April 2011</text>
<text x="419.4" y="607.6" font-size="11" fill="#8a8a8a" font-weight="400" text-anchor="start" textLength="67.5" lengthAdjust="spacingAndGlyphs" >October 2011</text>
<text x="528.8" y="607.6" font-size="11" fill="#8a8a8a" font-weight="400" text-anchor="start" textLength="50.8" lengthAdjust="spacingAndGlyphs" >April 2012</text>
<text x="621.2" y="607.6" font-size="11" fill="#8a8a8a" font-weight="400" text-anchor="start" textLength="67.2" lengthAdjust="spacingAndGlyphs" >October 2012</text>
<text x="729.7" y="607.6" font-size="11" fill="#8a8a8a" font-weight="400" text-anchor="start" textLength="50.8" lengthAdjust="spacingAndGlyphs" >April 2013</text>
<text x="821.5" y="607.6" font-size="11" fill="#8a8a8a" font-weight="400" text-anchor="start" textLength="68.3" lengthAdjust="spacingAndGlyphs" >October 2013</text>
<text x="546.4" y="628.7" font-size="11" fill="#333" font-weight="400" text-anchor="start" textLength="100.2" lengthAdjust="spacingAndGlyphs" stroke="#333" stroke-width="0.12">Month of OrderDate</text>
<rect x="296.75" y="532.2" width="12.7" height="20.8" fill="#4f6980" />
<rect x="296.75" y="553.0" width="12.7" height="2.0" fill="#849db1" />
<rect x="296.75" y="555.0" width="12.7" height="4.0" fill="#a2ceaa" />
<rect x="296.75" y="559.0" width="12.7" height="3.8" fill="#638b66" />
<rect x="296.75" y="562.8" width="12.7" height="4.3" fill="#bfbb60" />
<rect x="296.75" y="567.1" width="12.7" height="12.1" fill="#f47942" />
<rect x="308.55" y="532.2" width="0.9" height="20.8" fill="#2a4a6e" />
<rect x="296.75" y="532.2" width="12.7" height="0.8" fill="#2f5274" />
<rect x="313.82" y="533.3" width="12.7" height="19.7" fill="#4f6980" />
<rect x="313.82" y="553.0" width="12.7" height="2.0" fill="#849db1" />
<rect x="313.82" y="555.0" width="12.7" height="2.0" fill="#a2ceaa" />
<rect x="313.82" y="557.0" width="12.7" height="3.1" fill="#638b66" />
<rect x="313.82" y="560.1" width="12.7" height="5.7" fill="#bfbb60" />
<rect x="313.82" y="565.8" width="12.7" height="13.4" fill="#f47942" />
<rect x="325.62" y="533.3" width="0.9" height="19.7" fill="#2a4a6e" />
<rect x="313.82" y="533.3" width="12.7" height="0.8" fill="#2f5274" />
<rect x="329.24" y="531.3" width="12.7" height="18.1" fill="#4f6980" />
<rect x="329.24" y="549.4" width="12.7" height="1.3" fill="#849db1" />
<rect x="329.24" y="550.7" width="12.7" height="3.7" fill="#a2ceaa" />
<rect x="329.24" y="554.4" width="12.7" height="1.7" fill="#638b66" />
<rect x="329.24" y="556.1" width="12.7" height="7.0" fill="#bfbb60" />
<rect x="329.24" y="563.1" width="12.7" height="16.1" fill="#f47942" />
<rect x="341.04" y="531.3" width="0.9" height="18.1" fill="#2a4a6e" />
<rect x="329.24" y="531.3" width="12.7" height="0.8" fill="#2f5274" />
<rect x="346.31" y="529.5" width="12.7" height="21.5" fill="#4f6980" />
<rect x="346.31" y="551.0" width="12.7" height="1.3" fill="#849db1" />
<rect x="346.31" y="552.3" width="12.7" height="1.4" fill="#a2ceaa" />
<rect x="346.31" y="553.7" width="12.7" height="3.3" fill="#638b66" />
<rect x="346.31" y="557.0" width="12.7" height="5.0" fill="#bfbb60" />
<rect x="346.31" y="562.0" width="12.7" height="17.2" fill="#f47942" />
<rect x="358.11" y="529.5" width="0.9" height="21.5" fill="#2a4a6e" />
<rect x="346.31" y="529.5" width="12.7" height="0.8" fill="#2f5274" />
<rect x="362.83" y="523.2" width="12.7" height="20.8" fill="#4f6980" />
<rect x="362.83" y="544.0" width="12.7" height="3.7" fill="#849db1" />
<rect x="362.83" y="547.7" width="12.7" height="4.0" fill="#a2ceaa" />
<rect x="362.83" y="551.7" width="12.7" height="4.4" fill="#638b66" />
<rect x="362.83" y="556.1" width="12.7" height="2.7" fill="#bfbb60" />
<rect x="362.83" y="558.8" width="12.7" height="20.4" fill="#f47942" />
<rect x="374.63" y="523.2" width="0.9" height="20.8" fill="#2a4a6e" />
<rect x="362.83" y="523.2" width="12.7" height="0.8" fill="#2f5274" />
<rect x="379.9" y="505.4" width="12.7" height="26.6" fill="#4f6980" />
<rect x="379.9" y="532.0" width="12.7" height="3.2" fill="#849db1" />
<rect x="379.9" y="535.2" width="12.7" height="4.0" fill="#a2ceaa" />
<rect x="379.9" y="539.2" width="12.7" height="4.8" fill="#638b66" />
<rect x="379.9" y="544.0" width="12.7" height="6.7" fill="#bfbb60" />
<rect x="379.9" y="550.7" width="12.7" height="28.5" fill="#f47942" />
<rect x="391.7" y="505.4" width="0.9" height="26.6" fill="#2a4a6e" />
<rect x="379.9" y="505.4" width="12.7" height="0.8" fill="#2f5274" />
<rect x="396.42" y="520.2" width="12.7" height="21.1" fill="#4f6980" />
<rect x="396.42" y="541.3" width="12.7" height="5.6" fill="#849db1" />
<rect x="396.42" y="546.9" width="12.7" height="3.8" fill="#a2ceaa" />
<rect x="396.42" y="550.7" width="12.7" height="1.2" fill="#638b66" />
<rect x="396.42" y="551.9" width="12.7" height="6.6" fill="#bfbb60" />
<rect x="396.42" y="558.5" width="12.7" height="20.7" fill="#f47942" />
<rect x="408.22" y="520.2" width="0.9" height="21.1" fill="#2a4a6e" />
<rect x="396.42" y="520.2" width="12.7" height="0.8" fill="#2f5274" />
<rect x="413.49" y="518.1" width="12.7" height="17.8" fill="#4f6980" />
<rect x="413.49" y="535.9" width="12.7" height="17.0" fill="#849db1" />
<rect x="413.49" y="552.9" width="12.7" height="3.8" fill="#a2ceaa" />
<rect x="413.49" y="556.7" width="12.7" height="4.3" fill="#638b66" />
<rect x="413.49" y="561.0" width="12.7" height="5.0" fill="#bfbb60" />
<rect x="413.49" y="566.0" width="12.7" height="13.2" fill="#f47942" />
<rect x="425.29" y="518.1" width="0.9" height="17.8" fill="#2a4a6e" />
<rect x="413.49" y="518.1" width="12.7" height="0.8" fill="#2f5274" />
<rect x="430.56" y="519.1" width="12.7" height="22.0" fill="#4f6980" />
<rect x="430.56" y="541.1" width="12.7" height="1.9" fill="#849db1" />
<rect x="430.56" y="543.0" width="12.7" height="4.8" fill="#a2ceaa" />
<rect x="430.56" y="547.8" width="12.7" height="6.1" fill="#638b66" />
<rect x="430.56" y="553.9" width="12.7" height="2.8" fill="#bfbb60" />
<rect x="430.56" y="556.7" width="12.7" height="22.5" fill="#f47942" />
<rect x="442.36" y="519.1" width="0.9" height="22.0" fill="#2a4a6e" />
<rect x="430.56" y="519.1" width="12.7" height="0.8" fill="#2f5274" />
<rect x="447.08" y="509.2" width="12.7" height="22.0" fill="#4f6980" />
<rect x="447.08" y="531.2" width="12.7" height="6.7" fill="#849db1" />
<rect x="447.08" y="537.9" width="12.7" height="4.7" fill="#a2ceaa" />
<rect x="447.08" y="542.6" width="12.7" height="5.2" fill="#638b66" />
<rect x="447.08" y="547.8" width="12.7" height="3.6" fill="#bfbb60" />
<rect x="447.08" y="551.4" width="12.7" height="27.8" fill="#f47942" />
<rect x="458.88" y="509.2" width="0.9" height="22.0" fill="#2a4a6e" />
<rect x="447.08" y="509.2" width="12.7" height="0.8" fill="#2f5274" />
<rect x="464.15" y="513.5" width="12.7" height="21.0" fill="#4f6980" />
<rect x="464.15" y="534.5" width="12.7" height="4.2" fill="#849db1" />
<rect x="464.15" y="538.7" width="12.7" height="5.7" fill="#a2ceaa" />
<rect x="464.15" y="544.4" width="12.7" height="5.2" fill="#638b66" />
<rect x="464.15" y="549.6" width="12.7" height="3.3" fill="#bfbb60" />
<rect x="464.15" y="552.9" width="12.7" height="26.3" fill="#f47942" />
<rect x="475.95" y="513.5" width="0.9" height="21.0" fill="#2a4a6e" />
<rect x="464.15" y="513.5" width="12.7" height="0.8" fill="#2f5274" />
<rect x="480.67" y="512.7" width="12.7" height="19.2" fill="#4f6980" />
<rect x="480.67" y="531.9" width="12.7" height="6.8" fill="#849db1" />
<rect x="480.67" y="538.7" width="12.7" height="3.1" fill="#a2ceaa" />
<rect x="480.67" y="541.8" width="12.7" height="6.0" fill="#638b66" />
<rect x="480.67" y="547.8" width="12.7" height="2.6" fill="#bfbb60" />
<rect x="480.67" y="550.4" width="12.7" height="28.8" fill="#f47942" />
<rect x="492.47" y="512.7" width="0.9" height="19.2" fill="#2a4a6e" />
<rect x="480.67" y="512.7" width="12.7" height="0.8" fill="#2f5274" />
<rect x="497.74" y="529.4" width="12.7" height="12.2" fill="#4f6980" />
<rect x="497.74" y="541.6" width="12.7" height="5.2" fill="#849db1" />
<rect x="497.74" y="546.8" width="12.7" height="4.7" fill="#a2ceaa" />
<rect x="497.74" y="551.5" width="12.7" height="3.4" fill="#638b66" />
<rect x="497.74" y="554.9" width="12.7" height="4.7" fill="#bfbb60" />
<rect x="497.74" y="559.6" width="12.7" height="19.6" fill="#f47942" />
<rect x="509.54" y="529.4" width="0.9" height="12.2" fill="#2a4a6e" />
<rect x="497.74" y="529.4" width="12.7" height="0.8" fill="#2f5274" />
<rect x="514.81" y="528.6" width="12.7" height="13.5" fill="#4f6980" />
<rect x="514.81" y="542.1" width="12.7" height="6.6" fill="#849db1" />
<rect x="514.81" y="548.7" width="12.7" height="4.2" fill="#a2ceaa" />
<rect x="514.81" y="552.9" width="12.7" height="3.8" fill="#638b66" />
<rect x="514.81" y="556.7" width="12.7" height="5.3" fill="#bfbb60" />
<rect x="514.81" y="562.0" width="12.7" height="17.2" fill="#f47942" />
<rect x="526.61" y="528.6" width="0.9" height="13.5" fill="#2a4a6e" />
<rect x="514.81" y="528.6" width="12.7" height="0.8" fill="#2f5274" />
<rect x="530.78" y="542.1" width="12.7" height="13.2" fill="#4f6980" />
<rect x="530.78" y="555.3" width="12.7" height="1.4" fill="#849db1" />
<rect x="530.78" y="556.7" width="12.7" height="4.3" fill="#a2ceaa" />
<rect x="530.78" y="561.0" width="12.7" height="4.3" fill="#638b66" />
<rect x="530.78" y="565.3" width="12.7" height="4.2" fill="#bfbb60" />
<rect x="530.78" y="569.5" width="12.7" height="9.7" fill="#f47942" />
<rect x="542.58" y="542.1" width="0.9" height="13.2" fill="#2a4a6e" />
<rect x="530.78" y="542.1" width="12.7" height="0.8" fill="#2f5274" />
<rect x="547.85" y="539.3" width="12.7" height="17.7" fill="#4f6980" />
<rect x="547.85" y="557.0" width="12.7" height="1.9" fill="#849db1" />
<rect x="547.85" y="558.9" width="12.7" height="4.9" fill="#a2ceaa" />
<rect x="547.85" y="563.8" width="12.7" height="2.9" fill="#638b66" />
<rect x="547.85" y="566.7" width="12.7" height="2.1" fill="#bfbb60" />
<rect x="547.85" y="568.8" width="12.7" height="10.4" fill="#f47942" />
<rect x="559.65" y="539.3" width="0.9" height="17.7" fill="#2a4a6e" />
<rect x="547.85" y="539.3" width="12.7" height="0.8" fill="#2f5274" />
<rect x="564.37" y="544.3" width="12.7" height="10.0" fill="#4f6980" />
<rect x="564.37" y="554.3" width="12.7" height="0.6" fill="#849db1" />
<rect x="564.37" y="554.9" width="12.7" height="3.3" fill="#a2ceaa" />
<rect x="564.37" y="558.2" width="12.7" height="4.6" fill="#638b66" />
<rect x="564.37" y="562.8" width="12.7" height="5.3" fill="#bfbb60" />
<rect x="564.37" y="568.1" width="12.7" height="11.1" fill="#f47942" />
<rect x="576.17" y="544.3" width="0.9" height="10.0" fill="#2a4a6e" />
<rect x="564.37" y="544.3" width="12.7" height="0.8" fill="#2f5274" />
<rect x="581.44" y="524.2" width="12.7" height="19.1" fill="#4f6980" />
<rect x="581.44" y="543.3" width="12.7" height="2.5" fill="#849db1" />
<rect x="581.44" y="545.8" width="12.7" height="7.1" fill="#a2ceaa" />
<rect x="581.44" y="552.9" width="12.7" height="5.3" fill="#638b66" />
<rect x="581.44" y="558.2" width="12.7" height="7.8" fill="#bfbb60" />
<rect x="581.44" y="566.0" width="12.7" height="13.2" fill="#f47942" />
<rect x="593.24" y="524.2" width="0.9" height="19.1" fill="#2a4a6e" />
<rect x="581.44" y="524.2" width="12.7" height="0.8" fill="#2f5274" />
<rect x="597.96" y="535.0" width="12.7" height="19.2" fill="#4f6980" />
<rect x="597.96" y="554.2" width="12.7" height="0.7" fill="#849db1" />
<rect x="597.96" y="554.9" width="12.7" height="4.6" fill="#a2ceaa" />
<rect x="597.96" y="559.5" width="12.7" height="3.3" fill="#638b66" />
<rect x="597.96" y="562.8" width="12.7" height="3.3" fill="#bfbb60" />
<rect x="597.96" y="566.1" width="12.7" height="13.1" fill="#f47942" />
<rect x="609.76" y="535.0" width="0.9" height="19.2" fill="#2a4a6e" />
<rect x="597.96" y="535.0" width="12.7" height="0.8" fill="#2f5274" />
<rect x="615.03" y="527.2" width="12.7" height="22.1" fill="#4f6980" />
<rect x="615.03" y="549.3" width="12.7" height="1.9" fill="#849db1" />
<rect x="615.03" y="551.2" width="12.7" height="4.7" fill="#a2ceaa" />
<rect x="615.03" y="555.9" width="12.7" height="6.9" fill="#638b66" />
<rect x="615.03" y="562.8" width="12.7" height="3.0" fill="#bfbb60" />
<rect x="615.03" y="565.8" width="12.7" height="13.4" fill="#f47942" />
<rect x="626.83" y="527.2" width="0.9" height="22.1" fill="#2a4a6e" />
<rect x="615.03" y="527.2" width="12.7" height="0.8" fill="#2f5274" />
<rect x="632.1" y="530.0" width="12.7" height="19.9" fill="#4f6980" />
<rect x="632.1" y="549.9" width="12.7" height="2.2" fill="#849db1" />
<rect x="632.1" y="552.1" width="12.7" height="6.6" fill="#a2ceaa" />
<rect x="632.1" y="558.7" width="12.7" height="6.1" fill="#638b66" />
<rect x="632.1" y="564.8" width="12.7" height="1.7" fill="#bfbb60" />
<rect x="632.1" y="566.5" width="12.7" height="12.7" fill="#f47942" />
<rect x="643.9" y="530.0" width="0.9" height="19.9" fill="#2a4a6e" />
<rect x="632.1" y="530.0" width="12.7" height="0.8" fill="#2f5274" />
<rect x="648.62" y="526.1" width="12.7" height="21.0" fill="#4f6980" />
<rect x="648.62" y="547.1" width="12.7" height="1.7" fill="#849db1" />
<rect x="648.62" y="548.8" width="12.7" height="6.1" fill="#a2ceaa" />
<rect x="648.62" y="554.9" width="12.7" height="7.1" fill="#638b66" />
<rect x="648.62" y="562.0" width="12.7" height="4.1" fill="#bfbb60" />
<rect x="648.62" y="566.1" width="12.7" height="13.1" fill="#f47942" />
<rect x="660.42" y="526.1" width="0.9" height="21.0" fill="#2a4a6e" />
<rect x="648.62" y="526.1" width="12.7" height="0.8" fill="#2f5274" />
<rect x="665.69" y="526.1" width="12.7" height="18.8" fill="#4f6980" />
<rect x="665.69" y="544.9" width="12.7" height="2.2" fill="#849db1" />
<rect x="665.69" y="547.1" width="12.7" height="5.8" fill="#a2ceaa" />
<rect x="665.69" y="552.9" width="12.7" height="5.3" fill="#638b66" />
<rect x="665.69" y="558.2" width="12.7" height="7.6" fill="#bfbb60" />
<rect x="665.69" y="565.8" width="12.7" height="13.4" fill="#f47942" />
<rect x="677.49" y="526.1" width="0.9" height="18.8" fill="#2a4a6e" />
<rect x="665.69" y="526.1" width="12.7" height="0.8" fill="#2f5274" />
<rect x="682.21" y="517.3" width="12.7" height="22.0" fill="#4f6980" />
<rect x="682.21" y="539.3" width="12.7" height="1.7" fill="#849db1" />
<rect x="682.21" y="541.0" width="12.7" height="8.9" fill="#a2ceaa" />
<rect x="682.21" y="549.9" width="12.7" height="7.6" fill="#638b66" />
<rect x="682.21" y="557.5" width="12.7" height="8.3" fill="#bfbb60" />
<rect x="682.21" y="565.8" width="12.7" height="13.4" fill="#f47942" />
<rect x="694.01" y="517.3" width="0.9" height="22.0" fill="#2a4a6e" />
<rect x="682.21" y="517.3" width="12.7" height="0.8" fill="#2f5274" />
<rect x="699.28" y="493.9" width="12.7" height="22.3" fill="#4f6980" />
<rect x="699.28" y="516.2" width="12.7" height="4.8" fill="#849db1" />
<rect x="699.28" y="521.0" width="12.7" height="10.1" fill="#a2ceaa" />
<rect x="699.28" y="531.1" width="12.7" height="8.8" fill="#638b66" />
<rect x="699.28" y="539.9" width="12.7" height="13.2" fill="#bfbb60" />
<rect x="699.28" y="553.1" width="12.7" height="26.1" fill="#f47942" />
<rect x="711.08" y="493.9" width="0.9" height="22.3" fill="#2a4a6e" />
<rect x="699.28" y="493.9" width="12.7" height="0.8" fill="#2f5274" />
<rect x="716.35" y="501.9" width="12.7" height="17.0" fill="#4f6980" />
<rect x="716.35" y="518.9" width="12.7" height="5.8" fill="#849db1" />
<rect x="716.35" y="524.7" width="12.7" height="7.3" fill="#a2ceaa" />
<rect x="716.35" y="532.0" width="12.7" height="8.5" fill="#638b66" />
<rect x="716.35" y="540.5" width="12.7" height="11.5" fill="#bfbb60" />
<rect x="716.35" y="552.0" width="12.7" height="27.2" fill="#f47942" />
<rect x="728.15" y="501.9" width="0.9" height="17.0" fill="#2a4a6e" />
<rect x="716.35" y="501.9" width="12.7" height="0.8" fill="#2f5274" />
<rect x="731.77" y="474.6" width="12.7" height="33.3" fill="#4f6980" />
<rect x="731.77" y="507.9" width="12.7" height="7.1" fill="#849db1" />
<rect x="731.77" y="515.0" width="12.7" height="11.0" fill="#a2ceaa" />
<rect x="731.77" y="526.0" width="12.7" height="11.0" fill="#638b66" />
<rect x="731.77" y="537.0" width="12.7" height="13.5" fill="#bfbb60" />
<rect x="731.77" y="550.5" width="12.7" height="28.7" fill="#f47942" />
<rect x="743.57" y="474.6" width="0.9" height="33.3" fill="#2a4a6e" />
<rect x="731.77" y="474.6" width="12.7" height="0.8" fill="#2f5274" />
<rect x="748.84" y="475.3" width="12.7" height="32.6" fill="#4f6980" />
<rect x="748.84" y="507.9" width="12.7" height="4.2" fill="#849db1" />
<rect x="748.84" y="512.1" width="12.7" height="8.4" fill="#a2ceaa" />
<rect x="748.84" y="520.5" width="12.7" height="10.6" fill="#638b66" />
<rect x="748.84" y="531.1" width="12.7" height="13.8" fill="#bfbb60" />
<rect x="748.84" y="544.9" width="12.7" height="34.3" fill="#f47942" />
<rect x="760.64" y="475.3" width="0.9" height="32.6" fill="#2a4a6e" />
<rect x="748.84" y="475.3" width="12.7" height="0.8" fill="#2f5274" />
<rect x="765.36" y="451.4" width="12.7" height="35.3" fill="#4f6980" />
<rect x="765.36" y="486.7" width="12.7" height="8.5" fill="#849db1" />
<rect x="765.36" y="495.2" width="12.7" height="12.0" fill="#a2ceaa" />
<rect x="765.36" y="507.2" width="12.7" height="11.2" fill="#638b66" />
<rect x="765.36" y="518.4" width="12.7" height="18.6" fill="#bfbb60" />
<rect x="765.36" y="537.0" width="12.7" height="42.2" fill="#f47942" />
<rect x="777.16" y="451.4" width="0.9" height="35.3" fill="#2a4a6e" />
<rect x="765.36" y="451.4" width="12.7" height="0.8" fill="#2f5274" />
<rect x="782.43" y="416.1" width="12.7" height="34.8" fill="#4f6980" />
<rect x="782.43" y="450.9" width="12.7" height="12.2" fill="#849db1" />
<rect x="782.43" y="463.1" width="12.7" height="18.8" fill="#a2ceaa" />
<rect x="782.43" y="481.9" width="12.7" height="16.2" fill="#638b66" />
<rect x="782.43" y="498.1" width="12.7" height="22.4" fill="#bfbb60" />
<rect x="782.43" y="520.5" width="12.7" height="58.7" fill="#f47942" />
<rect x="794.23" y="416.1" width="0.9" height="34.8" fill="#2a4a6e" />
<rect x="782.43" y="416.1" width="12.7" height="0.8" fill="#2f5274" />
<rect x="798.95" y="442.6" width="12.7" height="38.3" fill="#4f6980" />
<rect x="798.95" y="480.9" width="12.7" height="11.8" fill="#849db1" />
<rect x="798.95" y="492.7" width="12.7" height="11.8" fill="#a2ceaa" />
<rect x="798.95" y="504.5" width="12.7" height="15.4" fill="#638b66" />
<rect x="798.95" y="519.9" width="12.7" height="15.8" fill="#bfbb60" />
<rect x="798.95" y="535.7" width="12.7" height="43.5" fill="#f47942" />
<rect x="810.75" y="442.6" width="0.9" height="38.3" fill="#2a4a6e" />
<rect x="798.95" y="442.6" width="12.7" height="0.8" fill="#2f5274" />
<rect x="816.02" y="424.9" width="12.7" height="42.9" fill="#4f6980" />
<rect x="816.02" y="467.8" width="12.7" height="9.1" fill="#849db1" />
<rect x="816.02" y="476.9" width="12.7" height="17.1" fill="#a2ceaa" />
<rect x="816.02" y="494.0" width="12.7" height="15.0" fill="#638b66" />
<rect x="816.02" y="509.0" width="12.7" height="20.0" fill="#bfbb60" />
<rect x="816.02" y="529.0" width="12.7" height="50.2" fill="#f47942" />
<rect x="827.82" y="424.9" width="0.9" height="42.9" fill="#2a4a6e" />
<rect x="816.02" y="424.9" width="12.7" height="0.8" fill="#2f5274" />
<rect x="833.09" y="435.2" width="12.7" height="37.6" fill="#4f6980" />
<rect x="833.09" y="472.8" width="12.7" height="8.1" fill="#849db1" />
<rect x="833.09" y="480.9" width="12.7" height="13.1" fill="#a2ceaa" />
<rect x="833.09" y="494.0" width="12.7" height="17.4" fill="#638b66" />
<rect x="833.09" y="511.4" width="12.7" height="18.5" fill="#bfbb60" />
<rect x="833.09" y="529.9" width="12.7" height="49.3" fill="#f47942" />
<rect x="844.89" y="435.2" width="0.9" height="37.6" fill="#2a4a6e" />
<rect x="833.09" y="435.2" width="12.7" height="0.8" fill="#2f5274" />
<rect x="849.61" y="412.2" width="12.7" height="45.5" fill="#4f6980" />
<rect x="849.61" y="457.7" width="12.7" height="11.0" fill="#849db1" />
<rect x="849.61" y="468.7" width="12.7" height="16.1" fill="#a2ceaa" />
<rect x="849.61" y="484.8" width="12.7" height="18.6" fill="#638b66" />
<rect x="849.61" y="503.4" width="12.7" height="19.6" fill="#bfbb60" />
<rect x="849.61" y="523.0" width="12.7" height="56.2" fill="#f47942" />
<rect x="861.41" y="412.2" width="0.9" height="45.5" fill="#2a4a6e" />
<rect x="849.61" y="412.2" width="12.7" height="0.8" fill="#2f5274" />
<rect x="866.68" y="402.1" width="12.7" height="39.4" fill="#4f6980" />
<rect x="866.68" y="441.5" width="12.7" height="14.5" fill="#849db1" />
<rect x="866.68" y="456.0" width="12.7" height="15.2" fill="#a2ceaa" />
<rect x="866.68" y="471.2" width="12.7" height="19.6" fill="#638b66" />
<rect x="866.68" y="490.8" width="12.7" height="19.5" fill="#bfbb60" />
<rect x="866.68" y="510.3" width="12.7" height="68.9" fill="#f47942" />
<rect x="878.48" y="402.1" width="0.9" height="39.4" fill="#2a4a6e" />
<rect x="866.68" y="402.1" width="12.7" height="0.8" fill="#2f5274" />
<rect x="883.2" y="392.9" width="12.7" height="45.8" fill="#4f6980" />
<rect x="883.2" y="438.7" width="12.7" height="12.3" fill="#849db1" />
<rect x="883.2" y="451.0" width="12.7" height="18.9" fill="#a2ceaa" />
<rect x="883.2" y="469.9" width="12.7" height="19.9" fill="#638b66" />
<rect x="883.2" y="489.8" width="12.7" height="25.0" fill="#bfbb60" />
<rect x="883.2" y="514.8" width="12.7" height="64.4" fill="#f47942" />
<rect x="895.0" y="392.9" width="0.9" height="45.8" fill="#2a4a6e" />
<rect x="883.2" y="392.9" width="12.7" height="0.8" fill="#2f5274" />
<rect x="280" y="575.0" width="10" height="4.2" fill="#4f6980" />
<rect x="280" y="577.5" width="10" height="1.7" fill="#f47942" />
<rect x="902" y="574.6" width="10.5" height="4.5" fill="#4f6980" />
<rect x="902" y="576.5" width="10.5" height="2.5" fill="#bfbb60" />
<polyline points="286.0,579 303.1,570.0 320.2,569.0 335.6,568.0 352.7,566.0 369.2,565.0 386.2,564.0 402.8,566.0 419.8,570.0 436.9,565.0 453.4,562.5 470.5,562.5 487.0,563.5 504.1,566.0 521.2,569.5 537.1,572.5 554.2,573.0 570.7,573.0 587.8,571.5 604.3,571.0 621.4,573.0 638.5,572.0 655.0,571.0 672.0,569.5 688.6,569.0 705.6,566.0 722.7,562.0 738.1,557.0 755.2,553.0 771.7,550.5 788.8,549.0 805.3,550.0 822.4,551.5 839.4,549.5 856.0,547.0 873.0,542.0 889.5,534.0 906.6,579" fill="none" stroke="#f47942" stroke-width="2.2" stroke-linejoin="round" stroke-opacity="0.9"/>
<polyline points="286.0,579 303.1,575.2 320.2,575.7 335.6,575.7 352.7,575.2 369.2,574.7 386.2,574.7 402.8,575.2 419.8,574.7 436.9,575.2 453.4,574.7 470.5,574.7 487.0,574.7 504.1,575.2 521.2,574.7 537.1,574.7 554.2,574.7 570.7,575.2 587.8,574.7 604.3,574.7 621.4,574.7 638.5,574.7 655.0,574.2 672.0,573.7 688.6,573.2 705.6,572.7 722.7,571.7 738.1,571.2 755.2,570.2 771.7,568.7 788.8,567.2 805.3,566.7 822.4,566.2 839.4,565.7 856.0,565.2 873.0,564.7 889.5,564.0 906.6,579" fill="none" stroke="#bfbb60" stroke-width="1.6" stroke-linejoin="round" />
<polyline points="286.0,579 303.1,576.0 320.2,576.5 335.6,576.5 352.7,576.0 369.2,575.5 386.2,575.5 402.8,576.0 419.8,575.5 436.9,576.0 453.4,575.5 470.5,575.5 487.0,575.5 504.1,576.0 521.2,575.5 537.1,575.5 554.2,575.5 570.7,576.0 587.8,575.5 604.3,575.5 621.4,575.5 638.5,575.5 655.0,575.0 672.0,574.5 688.6,574.0 705.6,573.5 722.7,572.5 738.1,572.0 755.2,571.0 771.7,569.5 788.8,568.0 805.3,567.5 822.4,567.0 839.4,566.5 856.0,566.0 873.0,565.5 889.5,564.8 906.6,579" fill="none" stroke="#a2ceaa" stroke-width="2.0" stroke-linejoin="round" />
<polyline points="286.0,579 303.1,576.8 320.2,577.3 335.6,577.3 352.7,576.8 369.2,576.3 386.2,576.3 402.8,576.8 419.8,576.3 436.9,576.8 453.4,576.3 470.5,576.3 487.0,576.3 504.1,576.8 521.2,576.3 537.1,576.3 554.2,576.3 570.7,576.8 587.8,576.3 604.3,576.3 621.4,576.3 638.5,576.3 655.0,575.8 672.0,575.3 688.6,574.8 705.6,574.3 722.7,573.3 738.1,572.8 755.2,571.8 771.7,570.3 788.8,568.8 805.3,568.3 822.4,567.8 839.4,567.3 856.0,566.8 873.0,566.3 889.5,565.5999999999999 906.6,579" fill="none" stroke="#638b66" stroke-width="1.2" stroke-linejoin="round" />
<polyline points="286.0,579 303.1,577.2 320.2,577.5 335.6,577.3 352.7,577.0 369.2,577.0 386.2,577.0 402.8,576.8 419.8,569.5 436.9,576.8 453.4,576.8 470.5,577.0 487.0,577.0 504.1,577.0 521.2,577.3 537.1,577.5 554.2,577.5 570.7,577.8 587.8,577.5 604.3,577.5 621.4,577.5 638.5,577.8 655.0,578.0 672.0,578.5 688.6,578.5 705.6,578.0 722.7,577.0 738.1,576.5 755.2,576.0 771.7,574.5 788.8,573.0 805.3,572.7 822.4,572.5 839.4,573.0 856.0,572.0 873.0,571.5 889.5,570.5 906.6,579" fill="none" stroke="#849db1" stroke-width="2.2" stroke-linejoin="round" />
<polyline points="286.0,577.5 303.1,566.4 320.2,567.2 335.6,568.1 352.7,566.4 369.2,566.0 386.2,562.8 402.8,566.4 419.8,567.6 436.9,566.4 453.4,565.8 470.5,566.7 487.0,567.8 504.1,572.0 521.2,571.3 537.1,570.8 554.2,568.5 570.7,572.5 587.8,567.2 604.3,568.1 621.4,566.6 638.5,568.3 655.0,567.1 672.0,567.8 688.6,566.0 705.6,566.0 722.7,568.9 738.1,559.0 755.2,559.5 771.7,557.8 788.8,557.0 805.3,556.0 822.4,553.4 839.4,556.4 856.0,551.6 873.0,554.6 889.5,551.6 906.6,579.0" fill="none" stroke="#4f6980" stroke-width="2.8" stroke-linejoin="round" />
</svg></body></html>
